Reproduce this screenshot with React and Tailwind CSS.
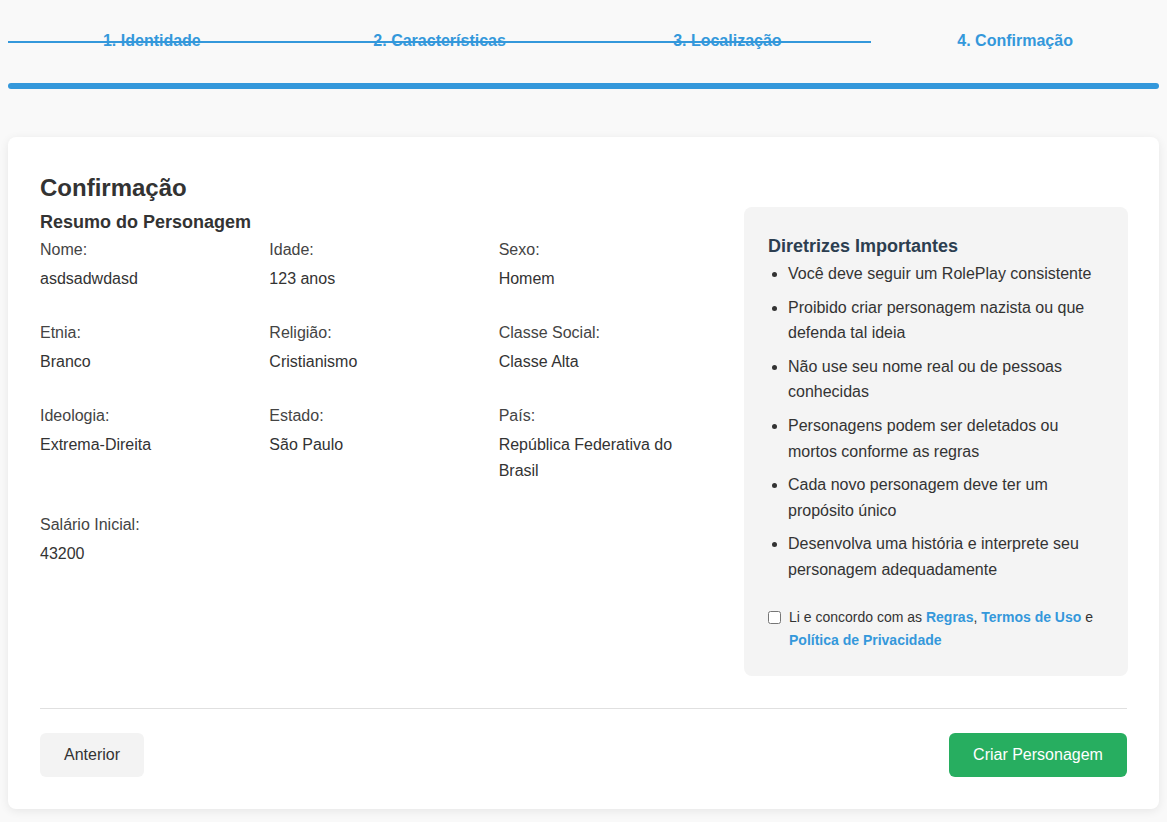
import React from 'react';

const steps = [
  { label: '1. Identidade', done: true },
  { label: '2. Características', done: true },
  { label: '3. Localização', done: true },
  { label: '4. Confirmação', done: false },
];

const summary = [
  ['Nome:', 'asdsadwdasd'],
  ['Idade:', '123 anos'],
  ['Sexo:', 'Homem'],
  ['Etnia:', 'Branco'],
  ['Religião:', 'Cristianismo'],
  ['Classe Social:', 'Classe Alta'],
  ['Ideologia:', 'Extrema-Direita'],
  ['Estado:', 'São Paulo'],
  ['País:', 'República Federativa do Brasil'],
  ['Salário Inicial:', '43200'],
];

const guidelines = [
  'Você deve seguir um RolePlay consistente',
  'Proibido criar personagem nazista ou que defenda tal ideia',
  'Não use seu nome real ou de pessoas conhecidas',
  'Personagens podem ser deletados ou mortos conforme as regras',
  'Cada novo personagem deve ter um propósito único',
  'Desenvolva uma história e interprete seu personagem adequadamente',
];

const App = () => {
  return (
    <div className="min-h-screen bg-[#f9f9f9] px-2 pt-[21px] pb-4 font-['Liberation_Sans',Arial,sans-serif] text-[#333]">
      {/* Stepper */}
      <div className="flex h-10">
        {steps.map((step) => (
          <div key={step.label} className="relative flex flex-1 items-center justify-center">
            <span className="text-base font-bold text-[#3498db]">{step.label}</span>
            {step.done && (
              <div className="absolute left-0 right-0 top-[20px] h-[2px] bg-[#3498db]" />
            )}
          </div>
        ))}
      </div>

      {/* Progress bar */}
      <div className="mt-[22px] h-[6px] rounded-full bg-[#3498db]" />

      {/* Card */}
      <div className="mt-12 rounded-lg bg-white p-8 shadow-[0_2px_10px_rgba(0,0,0,0.08)]">
        <h2 className="pt-px text-2xl leading-[36px] font-bold text-[#333]">Confirmação</h2>

        <div className="mt-px grid grid-cols-[688px_384px] gap-4">
          {/* Summary */}
          <div>
            <h3 className="mb-px pt-px text-lg leading-[28px] font-bold text-[#333]">Resumo do Personagem</h3>
            <div className="grid grid-cols-3">
              {summary.map(([label, value]) => (
                <div key={label} className="mb-7 pr-4">
                  <div className="mb-[3px] text-base leading-[26px] text-[#444]">{label}</div>
                  <div className="text-base leading-[26px] text-[#333]">{value}</div>
                </div>
              ))}
            </div>
          </div>

          {/* Guidelines */}
          <div className="rounded-lg bg-[#f4f4f4] p-6">
            <h3 className="mb-px pt-px text-lg leading-[28px] font-bold text-[#2c3e50]">Diretrizes Importantes</h3>
            <ul className="list-disc pl-5 text-base text-[#333]">
              {guidelines.map((item) => (
                <li key={item} className="mb-2 leading-[1.6]">{item}</li>
              ))}
            </ul>
            <label className="mt-[23px] flex items-start gap-2 text-sm leading-[23px] text-[#333]">
              <input type="checkbox" className="mt-[5px] h-[13px] w-[13px] shrink-0" />
              <span>
                Li e concordo com as <a className="font-bold text-[#3498db]">Regras</a>,{' '}
                <a className="font-bold text-[#3498db]">Termos de Uso</a> e{' '}
                <a className="font-bold text-[#3498db]">Política de Privacidade</a>
              </span>
            </label>
          </div>
        </div>

        {/* Footer */}
        <div className="mt-8 flex items-center justify-between border-t border-[#e0e0e0] pt-6">
          <button className="h-11 w-[104px] rounded-md bg-[#f3f3f3] text-base text-[#333]">Anterior</button>
          <button className="h-11 w-[178px] rounded-md bg-[#27ae60] text-base text-white">Criar Personagem</button>
        </div>
      </div>
    </div>
  );
};

export default App;
